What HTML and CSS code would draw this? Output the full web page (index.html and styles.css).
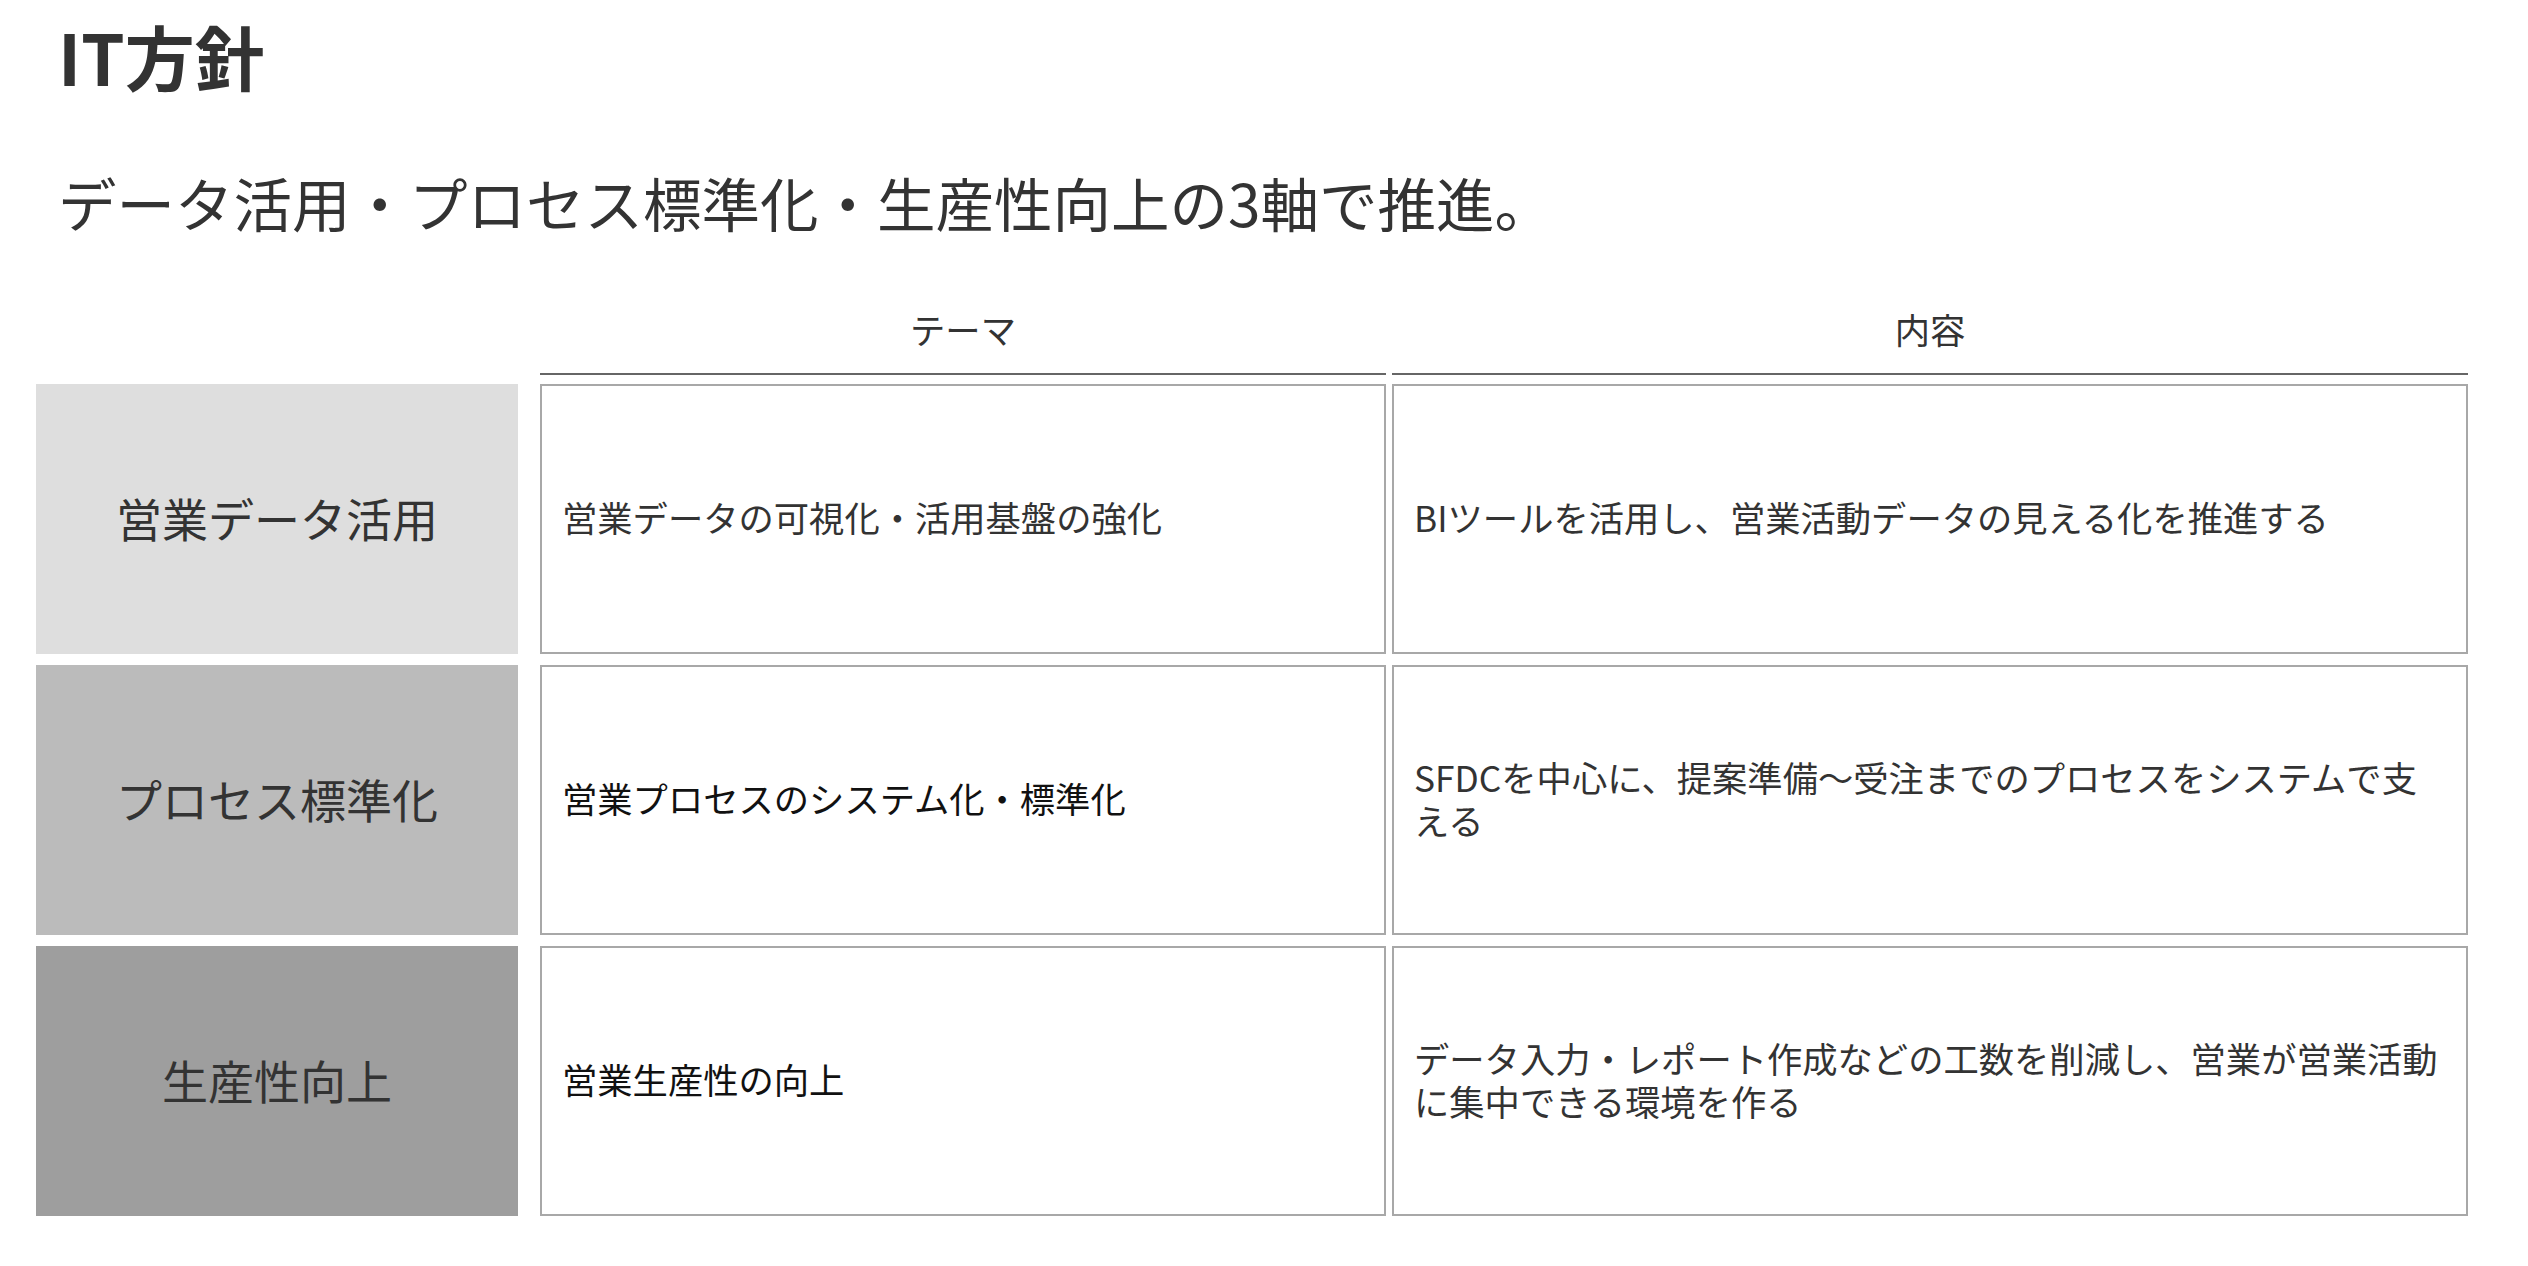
FILE: index.html
```html
<!DOCTYPE html>
<html lang="ja">
<head>
<meta charset="utf-8">
<title>IT方針</title>
<link rel="stylesheet" href="styles.css">
</head>
<body>
<main class="page">
  <header class="intro">
    <h1 class="title">IT方針</h1>
    <p class="lead">データ活用・プロセス標準化・生産性向上の3軸で推進。</p>
  </header>
  <section class="policy">
    <div class="policy-head blank"></div>
    <div class="policy-head">テーマ</div>
    <div class="policy-head">内容</div>

    <div class="axis axis-1">営業データ活用</div>
    <div class="cell theme">営業データの可視化・活用基盤の強化</div>
    <div class="cell detail">BIツールを活用し、営業活動データの見える化を推進する</div>

    <div class="axis axis-2">プロセス標準化</div>
    <div class="cell theme strong">営業プロセスのシステム化・標準化</div>
    <div class="cell detail">SFDCを中心に、提案準備〜受注までのプロセスをシステムで支える</div>

    <div class="axis axis-3">生産性向上</div>
    <div class="cell theme strong">営業生産性の向上</div>
    <div class="cell detail">データ入力・レポート作成などの工数を削減し、営業が営業活動に集中できる環境を作る</div>
  </section>
</main>
</body>
</html>
```

FILE: styles.css
```css
html, body {
  margin: 0;
  padding: 0;
  background: #ffffff;
}

body {
  font-family: "Noto Sans CJK JP", "Noto Sans", sans-serif;
  color: #333333;
}

.page {
  padding: 14px 0 0 36px;
}

.intro {
  padding-left: 22px;
}

.title {
  margin: 0;
  font-size: 70px;
  line-height: 84px;
  font-weight: 700;
  color: #333333;
}

.lead {
  margin: 70px 0 0 0;
  font-size: 58.5px;
  line-height: 68px;
  font-weight: 400;
  color: #333333;
}

.policy {
  display: grid;
  grid-template-columns: 498px 846px 1076px;
  grid-template-rows: auto 270px 270px 270px;
  column-gap: 6px;
  row-gap: 11px;
  margin-top: 72px;
}

.policy-head {
  font-size: 35.3px;
  line-height: 42px;
  text-align: center;
  color: #333333;
  padding-bottom: 23px;
  border-bottom: 2px solid #666666;
  margin-bottom: -2px;
}

.policy-head.blank {
  border-bottom: none;
}

.axis {
  margin-right: 16px;
  padding-bottom: 5px;
  display: flex;
  align-items: center;
  justify-content: center;
  font-size: 46px;
  color: #333333;
}

.axis-1 { background: #dedede; }
.axis-2 { background: #bbbbbb; }
.axis-3 { background: #9e9e9e; }

.cell {
  border: 2px solid #a8a8a8;
  display: flex;
  align-items: center;
  padding: 0 20px 5px 20px;
  font-size: 35.3px;
  line-height: 43px;
  color: #333333;
}

.cell.strong {
  color: #111111;
}
```
